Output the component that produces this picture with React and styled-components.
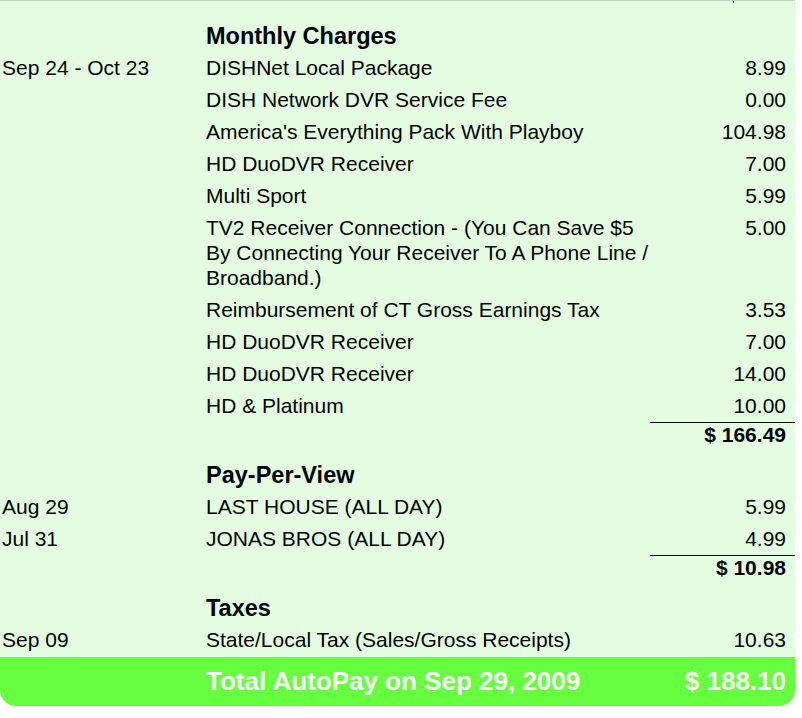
import React from 'react';
import styled, { createGlobalStyle } from 'styled-components';

const GlobalStyle = createGlobalStyle`
  html, body {
    margin: 0;
    padding: 0;
    background: #ffffff;
    overflow: hidden;
  }
  body {
    font-family: "Liberation Sans", Arial, sans-serif;
    color: #000;
  }
`

const Statement = styled.div`
  width: 795px;
  background: #e4fde0;
  border-top: 1px solid #c6cfc4;
  border-radius: 0 0 16px 16px;
  overflow: hidden;
`

const Section = styled.div`
  display: grid;
  grid-template-columns: 206px 444px 145px;
  margin-top: ${p => p.$offset || 0}px;
`

const Heading = styled.div`
  grid-column: 2 / 4;
  font-size: 23.5px;
  font-weight: bold;
  line-height: 32px;
  height: 32px;
`

const Cell = styled.div`
  font-size: 21px;
  line-height: 25px;
  padding: 3.5px 0;
`

const DateCell = styled(Cell)`
  grid-column: 1;
  padding-left: 2px;
`

const Desc = styled(Cell)`
  grid-column: 2;
`

const Amount = styled(Cell)`
  grid-column: 3;
  text-align: right;
  padding-right: 9px;
`

const Total = styled.div`
  grid-column: 3;
  border-top: 1px solid #000;
  text-align: right;
  padding: 0 9px 12px 0;
  font-size: 21px;
  font-weight: bold;
  line-height: 24px;
`

const TotalBar = styled.div`
  display: grid;
  grid-template-columns: 206px 1fr auto;
  align-items: center;
  height: 49px;
  margin-top: 1px;
  background: #66ff40;
  color: #fff;
  font-size: 26px;
  font-weight: bold;
  padding-right: 9px;

  span:first-child {
    grid-column: 2;
  }
`

const sections = [
  {
    title: 'Monthly Charges',
    total: '$ 166.49',
    rows: [
      ['Sep 24 - Oct 23', 'DISHNet Local Package', '8.99'],
      ['', 'DISH Network DVR Service Fee', '0.00'],
      ['', "America's Everything Pack With Playboy", '104.98'],
      ['', 'HD DuoDVR Receiver', '7.00'],
      ['', 'Multi Sport', '5.99'],
      ['', <>TV2 Receiver Connection - (You Can Save $5<br />By Connecting Your Receiver To A Phone Line / Broadband.)</>, '5.00'],
      ['', 'Reimbursement of CT Gross Earnings Tax', '3.53'],
      ['', 'HD DuoDVR Receiver', '7.00'],
      ['', 'HD DuoDVR Receiver', '14.00'],
      ['', 'HD & Platinum', '10.00'],
    ],
  },
  {
    title: 'Pay-Per-View',
    total: '$ 10.98',
    rows: [
      ['Aug 29', 'LAST HOUSE (ALL DAY)', '5.99'],
      ['Jul 31', 'JONAS BROS (ALL DAY)', '4.99'],
    ],
  },
  {
    title: 'Taxes',
    rows: [
      ['Sep 09', 'State/Local Tax (Sales/Gross Receipts)', '10.63'],
    ],
  },
]

function App() {
  return (
    <>
      <GlobalStyle />
      <Statement>
        {/* tail of the previous section, scrolled mostly out of view */}
        <Section $offset={-20}>
          <Total>$ 0.00</Total>
        </Section>
        {sections.map((s, i) => (
          <Section key={i} $offset={i === 0 ? 1.5 : 0}>
            <Heading>{s.title}</Heading>
            {s.rows.map((r, j) => (
              <React.Fragment key={j}>
                <DateCell>{r[0]}</DateCell>
                <Desc>{r[1]}</Desc>
                <Amount>{r[2]}</Amount>
              </React.Fragment>
            ))}
            {s.total && <Total>{s.total}</Total>}
          </Section>
        ))}
        <TotalBar>
          <span>Total AutoPay on Sep 29, 2009</span>
          <span>$ 188.10</span>
        </TotalBar>
      </Statement>
    </>
  )
}

export default App;
